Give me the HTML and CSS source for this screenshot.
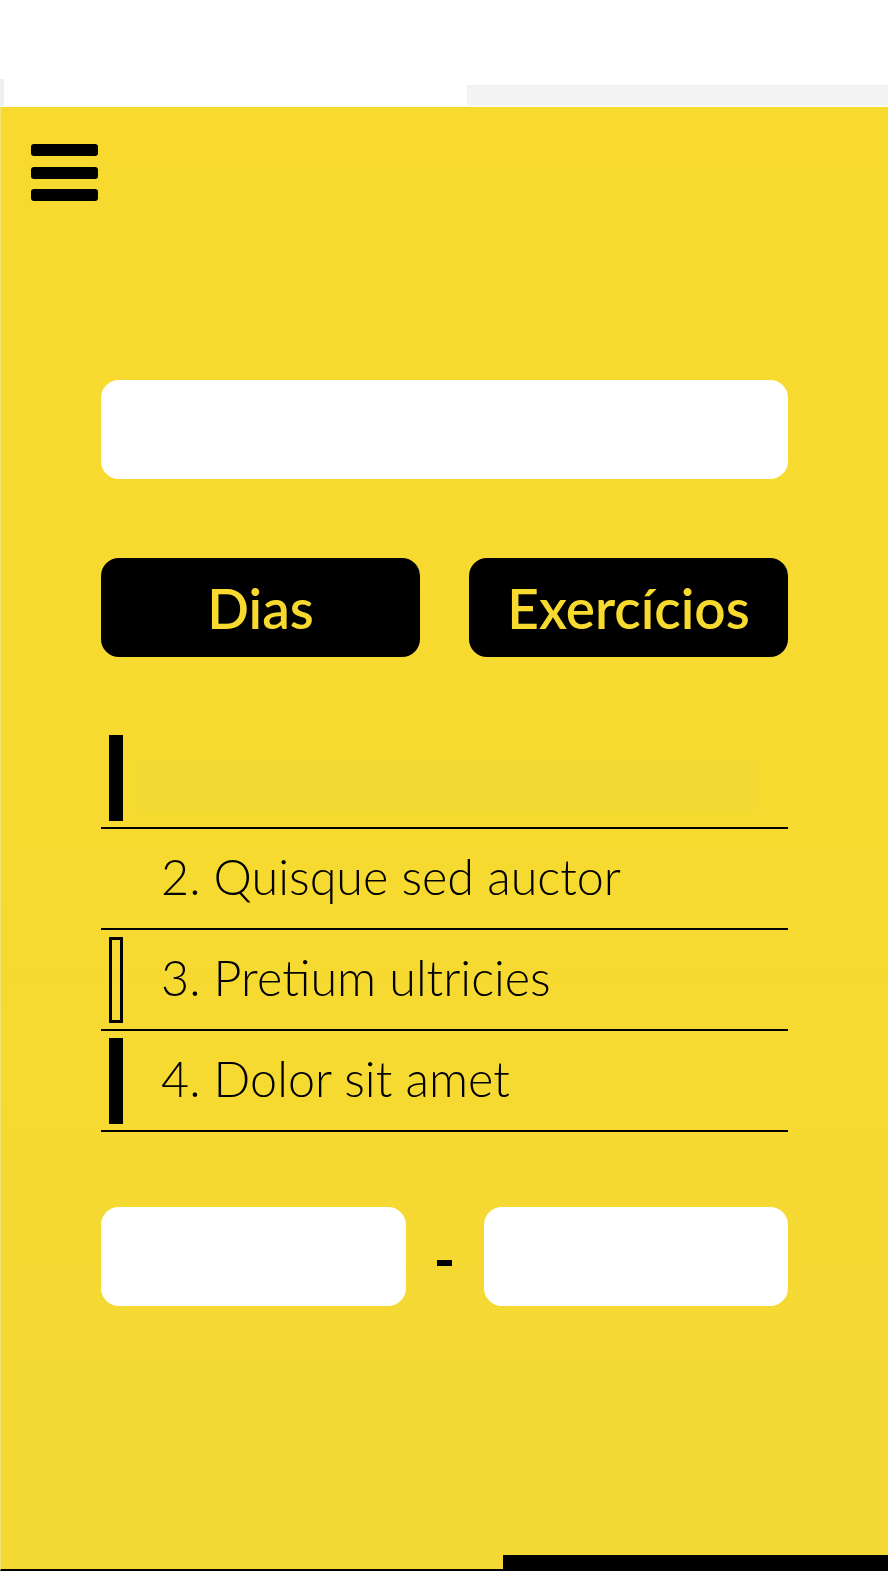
FILE: index.html
```html
<!DOCTYPE html>
<html lang="pt">
<head>
<meta charset="utf-8">
<title>Treino</title>
<link rel="stylesheet" href="styles.css">
</head>
<body>
<header class="topbar">
  <span class="tb-left"></span>
  <span class="tb-right"></span>
</header>
<main class="screen">
  <button class="menu" aria-label="Menu">
    <span class="menu-bar"></span>
    <span class="menu-bar"></span>
    <span class="menu-bar"></span>
  </button>
  <section class="content">
    <div class="field field-wide"></div>
    <div class="tabs">
      <button class="tab">Dias</button>
      <button class="tab">Exercícios</button>
    </div>
    <ul class="list">
      <li class="row">
        <span class="mark mark-solid"></span>
        <span class="placeholder"></span>
      </li>
      <li class="row">
        <span class="mark mark-none"></span>
        <span class="label">2. Quisque sed auctor</span>
      </li>
      <li class="row">
        <span class="mark mark-outline"></span>
        <span class="label">3. Pretium ultricies</span>
      </li>
      <li class="row">
        <span class="mark mark-solid"></span>
        <span class="label">4. Dolor sit amet</span>
      </li>
    </ul>
    <div class="range">
      <div class="field"></div>
      <span class="dash"></span>
      <div class="field"></div>
    </div>
  </section>
  <div class="footer-block"></div>
</main>
</body>
</html>
```
FILE: styles.css
```css
* { box-sizing: border-box; }

html, body {
  margin: 0;
  padding: 0;
  background: #ffffff;
  font-family: "Lato", "Liberation Sans", sans-serif;
}

.topbar {
  height: 107px;
  position: relative;
  background: #ffffff;
}

.tb-left {
  position: absolute;
  left: 0;
  top: 79px;
  width: 4px;
  height: 27px;
  background: #efefef;
}

.tb-right {
  position: absolute;
  left: 467px;
  right: 0;
  top: 85px;
  height: 20px;
  background: #f3f3f3;
}

.screen {
  height: 1464px;
  display: flex;
  flex-direction: column;
  background: linear-gradient(180deg, #f8da2f 0%, #f7da30 50%, #f4d934 100%);
  border-left: 1px solid #f1e27a;
  border-bottom: 2px solid #000;
}

.menu {
  margin: 37px 0 0 30px;
  padding: 0;
  border: 0;
  background: none;
  width: 67px;
  display: flex;
  flex-direction: column;
  gap: 10.5px;
  cursor: pointer;
}

.menu-bar {
  display: block;
  height: 12px;
  width: 67px;
  background: #000;
  border-radius: 3px;
}

.content {
  margin: 179px 0 0 100px;
  width: 687px;
  display: flex;
  flex-direction: column;
}

.field {
  height: 99px;
  background: #ffffff;
  border-radius: 18px;
}

.tabs {
  margin-top: 79px;
  display: grid;
  grid-template-columns: 1fr 1fr;
  column-gap: 49px;
}

.tab {
  height: 99px;
  border: 0;
  border-radius: 18px;
  background: #000;
  color: #f8da2f;
  font-family: "Lato", "Liberation Sans", sans-serif;
  font-size: 55px;
  font-weight: 600;
  padding: 0;
  cursor: pointer;
}

.list {
  list-style: none;
  margin: 71px 0 0;
  padding: 0;
}

.row {
  height: 101px;
  display: flex;
  align-items: center;
  border-bottom: 2px solid #000;
  padding-left: 8px;
}

.mark {
  width: 14px;
  height: 86px;
  flex: none;
}

.mark-solid { background: #000; }

.mark-outline {
  border: 3px solid #000;
}

.label {
  margin-left: 38px;
  padding-bottom: 5px;
  font-size: 48.5px;
  font-weight: 300;
  color: #000;
  line-height: 1;
}

.placeholder {
  margin: 16px 0 0 12px;
  width: 620px;
  height: 52px;
  background: #f3d933;
}

.range {
  margin-top: 75px;
  display: grid;
  grid-template-columns: 1fr 15px 1fr;
  column-gap: 31.5px;
  align-items: center;
}

.dash {
  height: 6px;
  background: #000;
  margin-top: 13px;
}

.footer-block {
  margin-top: auto;
  align-self: flex-end;
  width: 385px;
  height: 14px;
  background: #000;
}
```
